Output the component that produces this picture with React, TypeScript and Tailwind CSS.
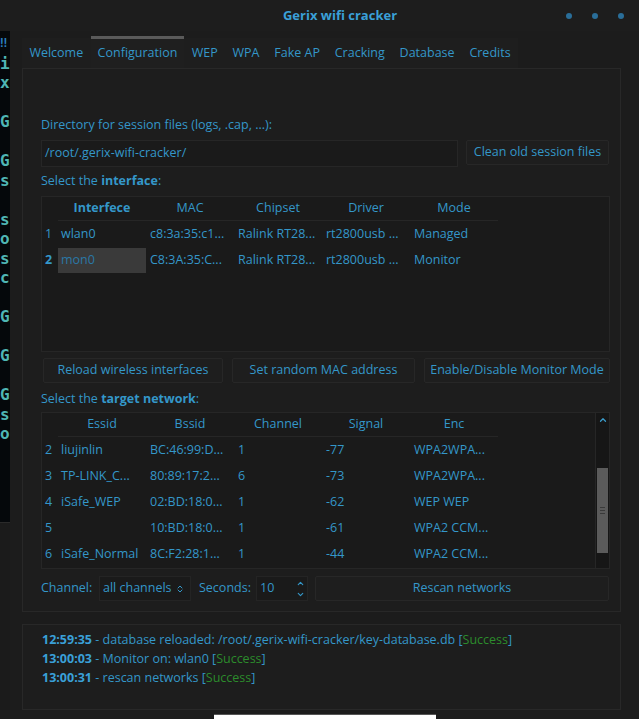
import { ChevronUp, ChevronDown } from "lucide-react";

const termLines = ["‼", "i", "x", "", "G", "", "G", "s", "", "s", "o", "s", "c", "", "G", "", "G", "", "G", "s", "o"];

const tabs = ["Welcome", "Configuration", "WEP", "WPA", "Fake AP", "Cracking", "Database", "Credits"];

const ifaceRows = [
  { n: "1", iface: "wlan0", mac: "c8:3a:35:c1...", chip: "Ralink RT28...", drv: "rt2800usb ...", mode: "Managed" },
  { n: "2", iface: "mon0", mac: "C8:3A:35:C...", chip: "Ralink RT28...", drv: "rt2800usb ...", mode: "Monitor" },
];

const netRows = [
  { n: "2", essid: "liujinlin", bssid: "BC:46:99:D...", ch: "1", sig: "-77", enc: "WPA2WPA..." },
  { n: "3", essid: "TP-LINK_C...", bssid: "80:89:17:2...", ch: "6", sig: "-73", enc: "WPA2WPA..." },
  { n: "4", essid: "iSafe_WEP", bssid: "02:BD:18:0...", ch: "1", sig: "-62", enc: "WEP WEP" },
  { n: "5", essid: "", bssid: "10:BD:18:0...", ch: "1", sig: "-61", enc: "WPA2 CCM..." },
  { n: "6", essid: "iSafe_Normal", bssid: "8C:F2:28:1...", ch: "1", sig: "-44", enc: "WPA2 CCM..." },
];

const logs = [
  { t: "12:59:35", msg: "database reloaded: /root/.gerix-wifi-cracker/key-database.db" },
  { t: "13:00:03", msg: "Monitor on: wlan0" },
  { t: "13:00:31", msg: "rescan networks" },
];

function Btn({ label, w }: { label: string; w: string }) {
  return (
    <div className={`${w} h-[25px] flex items-center justify-center bg-[#1e1e1e] border border-[#272727] rounded-[2px] text-[#3497c9]`}>
      {label}
    </div>
  );
}

function HeaderCells({ cols }: { cols: string[] }) {
  return (
    <div className="flex h-[24px] items-center">
      <div className="w-[16px]" />
      <div className="flex border-b border-[#262626] h-full items-center">
        {cols.map((c) => (
          <div key={c} className={`w-[88px] text-center ${c === "Interfece" ? "font-bold" : ""}`}>
            {c}
          </div>
        ))}
      </div>
    </div>
  );
}

export default function App() {
  return (
    <div
      className="relative w-[639px] h-[719px] overflow-hidden bg-[#1c1c1c] text-[12.5px] text-[#3497c9]"
      style={{ fontFamily: '"Open Sans", "Noto Sans", sans-serif' }}
    >
      {/* title bar */}
      <div className="h-[31px] flex items-center relative bg-[#1d1d1d]">
        <div className="flex-1 text-center pl-[114px] font-bold text-[13px] text-[#3aa0d8]">Gerix wifi cracker</div>
        <div className="flex gap-[20px] pr-[15px] items-center">
          <span className="w-[6px] h-[6px] rounded-full bg-[#2a6e99]" />
          <span className="w-[6px] h-[6px] rounded-full bg-[#2a6e99]" />
          <span className="w-[6px] h-[6px] rounded-full bg-[#2a6e99]" />
        </div>
      </div>

      <div className="flex">
        {/* terminal behind the window */}
        <div className="w-[10px] flex flex-col">
          <div className="h-[491px] bg-[#05080b] pt-[3px] font-bold text-[16px] leading-[19.5px] text-[#4fb6b4] overflow-hidden"
            style={{ fontFamily: '"DejaVu Sans Mono", monospace' }}>
            {termLines.map((l, i) => (
              <div key={i} className={`h-[19.5px] ${i === 0 ? "text-[#2b7fc0] text-[12px]" : ""}`}>{l}</div>
            ))}
          </div>
          <div className="flex-1 border-t border-[#2a2a2a] bg-[#1b1b1b]" />
        </div>

        <div className="flex-1 pl-[12px] pr-[18px]">
          {/* tabs */}
          <div className="flex h-[37px] items-end pt-[5px]">
            {tabs.map((t) => (
              <div
                key={t}
                className={
                  t === "Configuration"
                    ? "h-[32px] px-[7px] flex items-center border-t-[3px] border-[#5a5a5a] bg-[#1f1f1f]"
                    : "h-[30px] px-[7.4px] flex items-center bg-[#1e1e1e]"
                }
              >
                {t}
              </div>
            ))}
          </div>

          {/* configuration panel */}
          <div className="h-[544px] border border-[#282828] bg-[#1d1d1d] pl-[18px] pr-[10px] pt-[48px]">
            <div className="h-[16px] leading-[16px]">Directory for session files (logs, .cap, ...):</div>
            <div className="flex mt-[7px] gap-[8px]">
              <div className="w-[417px] h-[27px] bg-[#1a1a1a] border border-[#262626] flex items-center pl-[3px]">
                /root/.gerix-wifi-cracker/
              </div>
              <Btn label="Clean old session files" w="w-[143px]" />
            </div>
            <div className="mt-[6px] h-[16px] leading-[16px]">
              Select the <span className="font-bold">interface</span>:
            </div>

            <div className="mt-[7px] h-[156px] w-[569px] bg-[#1a1a1a] border border-[#262626]">
              <HeaderCells cols={["Interfece", "MAC", "Chipset", "Driver", "Mode"]} />
              {ifaceRows.map((r) => (
                <div key={r.n} className="flex h-[26px] items-center">
                  <div className={`w-[16px] pl-[3px] ${r.n === "2" ? "font-bold" : ""}`}>{r.n}</div>
                  <div className={`w-[88px] h-[25px] flex items-center pl-[3px] ${r.n === "2" ? "bg-[#3a3a3a] text-[#2a78a6]" : ""}`}>{r.iface}</div>
                  <div className="w-[88px] pl-[4px]">{r.mac}</div>
                  <div className="w-[88px] pl-[4px]">{r.chip}</div>
                  <div className="w-[88px] pl-[4px]">{r.drv}</div>
                  <div className="w-[88px] pl-[4px]">{r.mode}</div>
                </div>
              ))}
            </div>

            <div className="flex mt-[6px] gap-[9px] pl-[2px]">
              <Btn label="Reload wireless interfaces" w="w-[180px]" />
              <Btn label="Set random MAC address" w="w-[183px]" />
              <Btn label="Enable/Disable Monitor Mode" w="w-[186px]" />
            </div>

            <div className="mt-[8px] h-[16px] leading-[16px]">
              Select the <span className="font-bold">target network</span>:
            </div>

            <div className="mt-[5px] h-[157px] w-[569px] flex bg-[#1a1a1a] border border-[#262626]">
              <div className="flex-1">
                <HeaderCells cols={["Essid", "Bssid", "Channel", "Signal", "Enc"]} />
                {netRows.map((r) => (
                  <div key={r.n} className="flex h-[26px] items-center">
                    <div className="w-[16px] pl-[3px]">{r.n}</div>
                    <div className="w-[88px] pl-[3px] whitespace-nowrap">{r.essid}</div>
                    <div className="w-[88px] pl-[4px]">{r.bssid}</div>
                    <div className="w-[88px] pl-[4px]">{r.ch}</div>
                    <div className="w-[88px] pl-[4px]">{r.sig}</div>
                    <div className="w-[88px] pl-[4px]">{r.enc}</div>
                  </div>
                ))}
              </div>
              <div className="w-[14px] flex flex-col bg-[#161616] border-l border-[#262626]">
                <div className="h-[14px] flex items-center justify-center">
                  <ChevronUp size={10} strokeWidth={3} className="text-[#3a9ccc]" />
                </div>
                <div className="flex-1 pt-[41px] pb-[12px] px-[1px]">
                  <div className="h-[85px] bg-[#5b5b5b] flex items-center justify-center">
                    <div className="flex flex-col gap-[2px]">
                      <span className="w-[5px] h-px bg-[#3a3a3a]" />
                      <span className="w-[5px] h-px bg-[#3a3a3a]" />
                      <span className="w-[5px] h-px bg-[#3a3a3a]" />
                    </div>
                  </div>
                </div>
              </div>
            </div>

            <div className="flex items-center mt-[7px] h-[25px]">
              <span className="w-[58px]">Channel:</span>
              <div className="w-[92px] h-[25px] flex items-center pl-[3px] bg-[#1a1a1a] border border-[#242424]">
                all channels
                <span className="ml-[4px] flex flex-col -space-y-[4px]">
                  <ChevronUp size={8} strokeWidth={3} />
                  <ChevronDown size={8} strokeWidth={3} />
                </span>
              </div>
              <span className="ml-[8px] w-[57px]">Seconds:</span>
              <div className="w-[52px] h-[25px] flex items-center justify-between pl-[3px] pr-[2px] bg-[#1a1a1a] border border-[#242424]">
                10
                <span className="flex flex-col gap-[2px]">
                  <ChevronUp size={9} strokeWidth={3} />
                  <ChevronDown size={9} strokeWidth={3} />
                </span>
              </div>
              <div className="ml-[7px]">
                <Btn label="Rescan networks" w="w-[294px]" />
              </div>
            </div>
          </div>

          {/* log */}
          <div className="mt-[12px] h-[86px] border border-[#282828] bg-[#1d1d1d] pl-[19px] pt-[5px]">
            {logs.map((l) => (
              <div key={l.t} className="h-[19px] leading-[19px]">
                <span className="font-bold text-[#3aa0d8]">{l.t}</span> - {l.msg} [<span className="text-[#2c8c2c]">Success</span>]
              </div>
            ))}
          </div>
        </div>
      </div>

      {/* taskbar item peeking at the bottom */}
      <div className="absolute left-[214px] bottom-0 w-[222px] h-[5px] bg-white border-t border-[#555]" />
    </div>
  );
}
